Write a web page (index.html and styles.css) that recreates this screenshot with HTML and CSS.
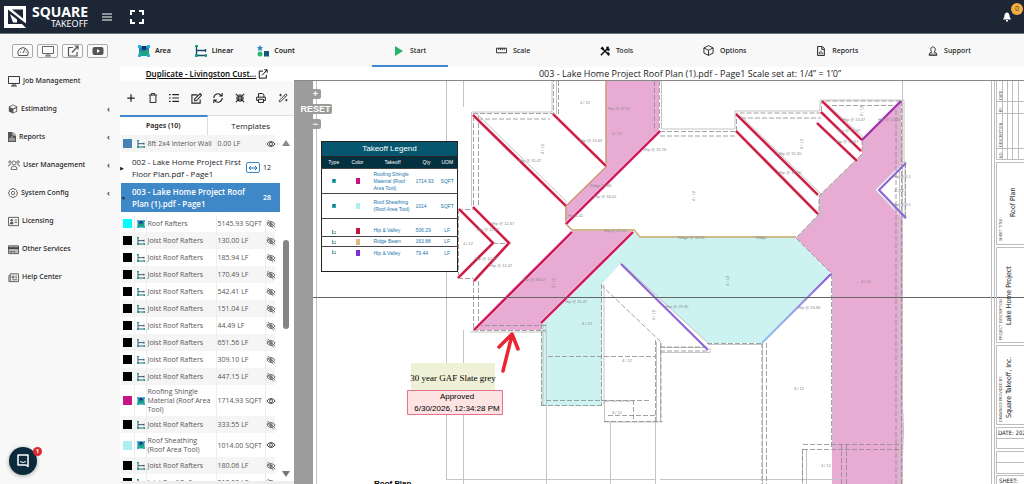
FILE: index.html
```html
<!DOCTYPE html>
<html lang="en">
<head>
<meta charset="utf-8">
<title>Square Takeoff</title>
<link rel="stylesheet" href="styles.css">
</head>
<body>
<svg class="defs" aria-hidden="true">
  <symbol id="area" viewBox="0 0 12 12"><path d="M1 1h10v10H1z" fill="#1b7fc4"/><path d="M1 5l4 2 6-3v7H1z" fill="#18a77a"/><path d="M4 1h4v4H4z" fill="#0c3d5c"/><path d="M0 0h3v3H0zM9 0h3v3H9zM0 9h3v3H0zM9 9h3v3H9z" fill="#2fa8e0"/></symbol>
  <symbol id="linear" viewBox="0 0 12 12"><path d="M1.500 1v10M1 10.500h10.500M1.500 5.500h9M10.500 4v3" fill="none" stroke="#174a63" stroke-width="1.300"/><path d="M0 0h3v2H0zM0 9h3v3H0zM10 9h2v3h-2z" fill="#1e9f88"/></symbol>
  <symbol id="off" viewBox="0 0 12 12"><path d="M1 6q5-6 10 0q-5 6-10 0zM2 1l9 9M1 3l8 8" fill="none" stroke="#555"/><circle cx="6" cy="6" r="2" fill="#777"/></symbol>
  <symbol id="eye" viewBox="0 0 12 12"><path d="M1 6q5-6 10 0q-5 6-10 0z" fill="none" stroke="#444" stroke-width="1.200"/><circle cx="6" cy="6" r="1.800" fill="none" stroke="#444"/></symbol>
  <symbol id="monitor" viewBox="0 0 12 12"><path d="M.5 1.500h11v7H.5zM5 8.500v2.500M7 8.500v2.500M3 11h6" fill="none" stroke="currentColor" stroke-width=".9"/></symbol>
  <symbol id="open" viewBox="0 0 12 12"><path d="M6 2.500H1.500v8.500H10V7M5 7.500L11 1M7.500 1H11v3.500" fill="none" stroke="currentColor" stroke-width="1.200"/></symbol>
</svg>
<header class="top">
  <a class="brand" href="#" aria-label="Square Takeoff">
    <svg class="mark" viewBox="0 0 22 22"><path d="M0 0h22v17.500L4 3.500V18h14l4 4H0z" fill="#fff"/><path d="M5 8l11 8.500H5zM8 3.500h11v9z" fill="#1d2634"/><path d="M6 8l7 5.500v3H9z" fill="#fff"/></svg>
    <span class="word"><b>SQUARE</b><span>TAKEOFF</span></span>
  </a>
  <button class="bare white" aria-label="Menu"><svg class="i10" viewBox="0 0 10 10"><path d="M0 2h10M0 5h10M0 8h10" stroke="currentColor" stroke-width="1.200"/></svg></button>
  <button class="bare white" aria-label="Full screen"><svg class="i14" viewBox="0 0 14 14"><path d="M1 5V1h4M9 1h4v4M13 9v4H9M5 13H1V9" fill="none" stroke="currentColor" stroke-width="2"/></svg></button>
  <button class="bare white bell" aria-label="Notifications"><svg class="i10" viewBox="0 0 10 10"><path d="M5 .5C2.500 1 2.500 3 2.300 5L1 7.500h8L7.700 5C7.500 3 7.500 1 5 .5zM4 8h2v1.500H4z" fill="currentColor"/></svg><span class="count">0</span></button>
</header>
<div class="shell">
<aside class="side">
  <div class="quick">
    <button aria-label="Dashboard"><svg class="i12" viewBox="0 0 12 12"><path d="M1.500 10.500a5.200 5.200 0 1 1 9 0zM6 8l2-4M3 7h1M8.500 7h1M4 4l.5.500" fill="none" stroke="currentColor"/></svg></button>
    <button aria-label="Screen"><svg class="i12"><use href="#monitor"/></svg></button>
    <button aria-label="Open"><svg class="i12"><use href="#open"/></svg></button>
    <button aria-label="Videos"><svg class="i12" viewBox="0 0 12 12"><rect x=".5" y="2" width="11" height="8" rx="2" fill="currentColor"/><path d="M5 4l3 2-3 2z" fill="#fff"/></svg></button>
  </div>
  <nav class="menu">
    <a href="#"><svg class="i12"><use href="#monitor"/></svg>Job Management</a>
    <a href="#"><svg class="i10" viewBox="0 0 12 12"><path d="M6 .5l5 2.500v6L6 11.500 1 9V3z" fill="#555"/><path d="M2 3.500l4 2 4-2-4-2zM6.500 6.500L10 5v3.500l-3.500 2z" fill="#f8f8f8"/></svg>Estimating<i>‹</i></a>
    <a href="#"><svg class="i8" viewBox="0 0 8 10"><path d="M0 0h5l3 3v7H0z" fill="#555"/><path d="M5 0v3h3M2 9V6M4 9V4.500M6 9V6" fill="none" stroke="#fff" stroke-width=".8"/></svg>Reports<i>‹</i></a>
    <a href="#"><svg class="i12" viewBox="0 0 12 12"><g fill="none" stroke="#555" stroke-width=".8"><circle cx="6" cy="4" r="2"/><circle cx="2" cy="3" r="1.200"/><circle cx="10" cy="3" r="1.200"/><path d="M3 10.500q0-3.500 3-3.500t3 3.500zM.3 7.500Q.3 5.500 3 5.500M11.700 7.500q0-2-2.700-2"/></g></svg>User Management<i>‹</i></a>
    <a href="#"><svg class="i10" viewBox="0 0 12 12"><g fill="none" stroke="#555"><path d="M5 .5h2l.5 1.500 1.500-.5L10.500 3 10 4.500l1.500.5v2l-1.500.5.500 1.500L9 10.500 7.500 10 7 11.500H5L4.500 10 3 10.500 1.500 9 2 7.500.5 7V5L2 4.500 1.500 3 3 1.500l1.500.5z"/><circle cx="6" cy="6" r="2"/></g></svg>System Config<i>‹</i></a>
    <a href="#"><svg class="i11" viewBox="0 0 12 12"><path d="M.5 1.500h11v9H.5zM7 4.500h3M7 7h3" fill="none" stroke="#555"/><circle cx="4" cy="4.500" r="1.300" fill="#555"/><path d="M2 9q0-3 2-3t2 3z" fill="#555"/></svg>Licensing</a>
    <a href="#"><svg class="i11" viewBox="0 0 12 12"><path d="M.5 2h11v8.500H.5z" fill="#bbb" stroke="#555"/><path d="M0 4.500h12" stroke="#444" stroke-width="2"/><path d="M2 8.500h3M6 8.500h2" stroke="#444"/></svg>Other Services</a>
    <a href="#"><svg class="i11" viewBox="0 0 12 12"><path d="M2.500 2h9v8.500H1V4h1.500zM2.500 4v6M4.500 4.500h2v2h-2zM8 4.500h2M8 6.500h2M4.500 8.500H10" fill="none" stroke="#555"/></svg>Help Center</a>
  </nav>
  <button class="chat" aria-label="Open chat"><svg class="i14" viewBox="0 0 14 14"><path d="M2 1h10v11.500L10 11H2z" fill="none" stroke="#fff" stroke-width="1.500" stroke-linejoin="round"/><path d="M4 7.500q3 2 6 0" fill="none" stroke="#fff"/></svg><span>1</span></button>
</aside>
<main class="main">
  <div class="bar">
    <div class="kinds">
      <button class="bare"><svg class="i12"><use href="#area"/></svg>Area</button>
      <button class="bare"><svg class="i12"><use href="#linear"/></svg>Linear</button>
      <button class="bare"><svg class="i12" viewBox="0 0 12 12"><path d="M3 0l1 2 2 .3L4.500 3.700 5 6 3 5 1 6l.5-2.300L0 2.300 2 2z" fill="#2a86d8"/><circle cx="3" cy="9" r="2.500" fill="#2bb673"/><path d="M7 6h5v5.500H7z" fill="#135a78"/></svg>Count</button>
    </div>
    <nav class="tabs">
      <a class="on" href="#"><svg class="i10" viewBox="0 0 10 10"><path d="M1 0l8 5-8 5z" fill="#26b36a"/></svg>Start</a>
      <a href="#"><svg class="i11" viewBox="0 0 12 12"><path d="M.5 3.500h11v5H.5zM3 3.500v2M5 3.500v2M7 3.500v2M9 3.500v2" fill="none" stroke="#222"/></svg>Scale</a>
      <a href="#"><svg class="i10" viewBox="0 0 12 12"><path d="M2 2l8.500 8.500M1 11l9-9" stroke="#111" stroke-width="1.800"/><path d="M.5 3L3 .5 5 3 3 5zM7.500 1l3-.5v3l1.500-.5-1 3-3-1z" fill="#111"/><path d="M8 9l2-2 2 3-2 2z" fill="#111"/></svg>Tools</a>
      <a href="#"><svg class="i11" viewBox="0 0 12 12"><path d="M6 .7l5 2.500v5.600l-5 2.500-5-2.500V3.200zM1 3.200l5 2.500 5-2.500M6 5.700v5.600" fill="none" stroke="#222"/></svg>Options</a>
      <a href="#"><svg class="i10" viewBox="0 0 12 12"><path d="M2 .5h5.500L10 3v8.500H2zM7 .5V4h3" fill="none" stroke="#222" stroke-width="1.200"/><path d="M4 10V7M6 10V5.500M8 10V8" stroke="#222"/></svg>Reports</a>
      <a href="#"><svg class="i10" viewBox="0 0 12 12"><path d="M1.500 11.500v-2q0-1.500 3-2Q2.500 5 3.500 2.500 6-1 8.500 2.500q1 2.500-1 5 3 .5 3 2v2zM1.500 9.800h9" fill="none" stroke="#222"/></svg>Support</a>
    </nav>
  </div>
  <div class="work">
  <section class="panel">
    <a class="job" href="#"><span>Duplicate - Livingston Cust...</span><svg class="i10"><use href="#open"/></svg></a>
    <div class="tools">
      <button class="bare" aria-label="Add"><svg class="i10" viewBox="0 0 12 12"><path d="M6 1.500v9M1.500 6h9" stroke="#222" stroke-width="1.500"/></svg></button>
      <button class="bare" aria-label="Delete"><svg class="i10" viewBox="0 0 12 12"><path d="M1 2.500h10M4 2.500v-2h4v2M2.500 3v8.500h7V3" fill="none" stroke="#222" stroke-width="1.200"/></svg></button>
      <button class="bare" aria-label="List"><svg class="i10" viewBox="0 0 12 12"><path d="M0 2h2M0 6h2M0 10h2M4 2h8M4 6h8M4 10h8" stroke="#222" stroke-width="1.400"/></svg></button>
      <button class="bare" aria-label="Edit"><svg class="i11" viewBox="0 0 12 12"><path d="M7 2H1v9h9V7M4 8.500V6.500L10 .7l1.500 1.500L6 8.500z" fill="none" stroke="#222" stroke-width="1.200"/></svg></button>
      <button class="bare" aria-label="Refresh"><svg class="i10" viewBox="0 0 12 12"><path d="M1 6a5 5 0 0 1 9-3M11 0v3.500H7.500M11 6a5 5 0 0 1-9 3M1 12V8.500h3.500" fill="none" stroke="#222" stroke-width="1.300"/></svg></button>
      <button class="bare" aria-label="Collapse"><svg class="i10" viewBox="0 0 12 12"><path d="M1 1l4 4M5 1.500V5H1.500M11 1L7 5M7 1.500V5h3.500M1 11l4-4M1.500 7H5v3.500M11 11L7 7M7 10.500V7h3.500" fill="none" stroke="#222" stroke-width="1.300"/></svg></button>
      <button class="bare" aria-label="Print"><svg class="i10" viewBox="0 0 12 12"><path d="M3 5V.7h5L9.500 2v3M3 9H.8V5h10.400v4H9M3 7.500h6v4H3z" fill="none" stroke="#222" stroke-width="1.200"/></svg></button>
      <button class="bare" aria-label="Magic"><svg class="i10" viewBox="0 0 12 12"><path d="M1 9.500L9.500 1 11 2.500 2.500 11zM7.500 3L9 4.500M3 1v3M1.500 2.500h3M10 7v3M8.500 8.500h3" fill="none" stroke="#222"/></svg></button>
    </div>
    <div class="switch"><button class="on">Pages (10)</button><button>Templates</button></div>
    <div class="tree">
      <div class="rows">
        <table class="items first"><tr><td><span class="sw steel"></span></td><td><svg class="i8"><use href="#linear"/></svg></td><td>8ft 2x4 Interior Wall</td><td>0.00 LF</td><td><svg class="i10"><use href="#eye"/></svg></td></tr></table>
        <div class="page"><button class="bare tw" aria-label="Expand">▶</button><span>002 - Lake Home Project First Floor Plan.pdf - Page1</span><button class="fit" aria-label="Fit width"><svg class="i10" viewBox="0 0 10 10"><path d="M1 5h8M3 3L1 5l2 2M7 3l2 2-2 2" fill="none" stroke="currentColor"/></svg></button><em>12</em></div>
        <div class="page current"><button class="bare tw" aria-label="Collapse">▼</button><span>003 - Lake Home Project Roof Plan (1).pdf - Page1</span><em>28</em></div>
        <table class="items">
          <tr><td><span class="sw aqua"></span></td><td><svg class="i8"><use href="#area"/></svg></td><td>Roof Rafters</td><td>5145.93 SQFT</td><td><svg class="i10"><use href="#off"/></svg></td></tr>
          <tr><td><span class="sw"></span></td><td><svg class="i8"><use href="#linear"/></svg></td><td>Joist Roof Rafters</td><td>130.00 LF</td><td><svg class="i10"><use href="#off"/></svg></td></tr>
          <tr><td><span class="sw"></span></td><td><svg class="i8"><use href="#linear"/></svg></td><td>Joist Roof Rafters</td><td>185.94 LF</td><td><svg class="i10"><use href="#off"/></svg></td></tr>
          <tr><td><span class="sw"></span></td><td><svg class="i8"><use href="#linear"/></svg></td><td>Joist Roof Rafters</td><td>170.49 LF</td><td><svg class="i10"><use href="#off"/></svg></td></tr>
          <tr><td><span class="sw"></span></td><td><svg class="i8"><use href="#linear"/></svg></td><td>Joist Roof Rafters</td><td>542.41 LF</td><td><svg class="i10"><use href="#off"/></svg></td></tr>
          <tr><td><span class="sw"></span></td><td><svg class="i8"><use href="#linear"/></svg></td><td>Joist Roof Rafters</td><td>151.04 LF</td><td><svg class="i10"><use href="#off"/></svg></td></tr>
          <tr><td><span class="sw"></span></td><td><svg class="i8"><use href="#linear"/></svg></td><td>Joist Roof Rafters</td><td>44.49 LF</td><td><svg class="i10"><use href="#off"/></svg></td></tr>
          <tr><td><span class="sw"></span></td><td><svg class="i8"><use href="#linear"/></svg></td><td>Joist Roof Rafters</td><td>651.56 LF</td><td><svg class="i10"><use href="#off"/></svg></td></tr>
          <tr><td><span class="sw"></span></td><td><svg class="i8"><use href="#linear"/></svg></td><td>Joist Roof Rafters</td><td>309.10 LF</td><td><svg class="i10"><use href="#off"/></svg></td></tr>
          <tr><td><span class="sw"></span></td><td><svg class="i8"><use href="#linear"/></svg></td><td>Joist Roof Rafters</td><td>447.15 LF</td><td><svg class="i10"><use href="#off"/></svg></td></tr>
          <tr><td><span class="sw plum"></span></td><td><svg class="i8"><use href="#area"/></svg></td><td>Roofing Shingle Material (Roof Area Tool)</td><td>1714.93 SQFT</td><td><svg class="i10"><use href="#eye"/></svg></td></tr>
          <tr><td><span class="sw"></span></td><td><svg class="i8"><use href="#linear"/></svg></td><td>Joist Roof Rafters</td><td>333.55 LF</td><td><svg class="i10"><use href="#off"/></svg></td></tr>
          <tr><td><span class="sw mint"></span></td><td><svg class="i8"><use href="#area"/></svg></td><td>Roof Sheathing (Roof Area Tool)</td><td>1014.00 SQFT</td><td><svg class="i10"><use href="#eye"/></svg></td></tr>
          <tr><td><span class="sw"></span></td><td><svg class="i8"><use href="#linear"/></svg></td><td>Joist Roof Rafters</td><td>180.06 LF</td><td><svg class="i10"><use href="#off"/></svg></td></tr>
          <tr><td><span class="sw"></span></td><td><svg class="i8"><use href="#linear"/></svg></td><td>Joist Roof Rafters</td><td>210.50 LF</td><td><svg class="i10"><use href="#off"/></svg></td></tr>
        </table>
      </div>
      <div class="scroll"><i class="up"></i><div class="track"><b></b></div><i class="down"></i></div>
    </div>
  </section>
  <section class="view">
    <h1>003 - Lake Home Project Roof Plan (1).pdf - Page1 Scale set at: 1/4” = 1’0”</h1>
    <div class="canvas">
      <svg class="plan" viewBox="294 81 730 403" preserveAspectRatio="xMinYMin slice">
        <defs><linearGradient id="fade" x1="1" y1="0" x2="0" y2="1"><stop offset="0" stop-color="#8a50cf"/><stop offset=".5" stop-color="#9a9ce6"/><stop offset="1" stop-color="#8cc4e8"/></linearGradient></defs>
        <path d="M294 80h19v404h-19z" fill="#9c9c9c"/>
        <g fill="#e8abd3">
          <path d="M606 80h53v51l-93 93v-18l40-39z"/>
          <path d="M572 231h61l-92 93h5v6h-73z"/>
          <path d="M901 101l-39 39v14l-43 42v18l-23 24 36 36v210h70l2-54-2-50V218l-27-28 27-27z"/>
        </g>
        <path d="M541 324l93-92 6 6h156l35 36-69 69h-54l-88-79-18 20v122h-61z" fill="#ccf3f2"/>
        <g fill="none" stroke="#c4c4c4">
          <path d="M316.500 81v403M446.500 81v398M463.500 81v26M463.500 330v154M546.500 331v153M610.500 421v63M655.500 421v63M902.500 81v403M446 479.500h210M660 479.500h180"/>
          <path d="M471.500 206v-94H552V81M556.500 81v33M661.500 81v48H735v-18h85V100h84v63M604 284v121M832.500 272v177M762.500 343v141M708 344.500h54M656.500 342v80M660.500 342v80M470 332h76v-9M604.500 401v21h58M802.500 449v35M806.500 449v35M660 352.500h50v-4M543 324v82M899.500 110v374"/>
          <path d="M475 112l92 90M660 347.500h46M740 115l81 79v20l-22 24M824 101l41 38v15l-43 42M620 262l88 81M566 206v18l5 5M875 190l30-29v58l-30-29"/>
        </g>
        <g fill="none" stroke="#8c8c8c" stroke-width=".8" stroke-dasharray="5 2">
          <path d="M473 113.500h80.500V81M473.500 116v91M478.500 116v91M478 119h72M558.500 81v34M659.500 81v50M654.500 81v50M660 131.500h76M660 136h76M736.500 131v-18h85v-12h80M741 118h80M825 105.500h70M473.500 281v49M478.500 281v49M458.500 209v69M473 330.500h73M478 325.500h68M541.500 324v81M601.500 284v121M541 405.500h63M546 400.500h105M548 356.500h107M601 285l60 57v79M655.500 340v81M604 421.500h58M604.500 401h29v20M608 415.500h48M660 347h48M660 351h48M707 343.500h55M762 343v141M766.500 343v141M831.500 274v175M803 444.500h99M803 449.500h99M802.500 449v35M841.500 444v40M846.500 444v40M896 110v374M901.500 101v383M905.500 163v55M862 140v14l-43 42v18l-23 24 36 36M493 243.500h16M458 209.500h15M458 278.500h15"/>
        </g>
        <path d="M572 230h62l6 7h156" fill="none" stroke="#cdbb8c" stroke-width="1.800"/>
        <path d="M606 81v86l-40 39v18l6 6" fill="none" stroke="#cf9874" stroke-width="1.500"/>
        <g fill="none" stroke="#ffd0d8" stroke-width="3.500"><path d="M473 115l93 91M553 114l53 52M736 114l82 81M736 131l82 83M822 101l40 39M821 112l40 39M817 123l40 38M459 209l34 34-35 35M473 207l36 36-35 38M660 131l-94 93M572 232l-98 98M633 232l-92 91"/></g>
        <g fill="none" stroke="#c71c42" stroke-width="2.400"><path d="M473 115l93 91M553 114l53 52M736 114l82 81M736 131l82 83M822 101l40 39M821 112l40 39M817 123l40 38M459 209l34 34-35 35M473 207l36 36-35 38"/><path stroke="#ca1760" d="M660 131l-94 93M572 232l-98 98M633 232l-92 91"/></g>
        <path d="M901 101l-39 39" stroke="#9d35b0" stroke-width="2.400"/>
        <path d="M906 163l-27 27 27 28M621 264l87 86" fill="none" stroke="#8f68d6" stroke-width="2.200"/>
        <path d="M831 274l-69 69" stroke="url(#fade)" stroke-width="2"/>
        <g class="tiny">
          <text x="519" y="162">Hip @ 31.47</text><text x="580" y="142">Hip @ 19.43</text><text x="608" y="110">Hip @ 37.57</text><text x="644" y="151">Hip @ 31.76</text><text x="590" y="187">Ridge 13.86</text><text x="594" y="198">Hip @ 34.02</text><text x="568" y="217">Hip 6.42</text><text x="604" y="232">Hip @ 27.01</text><text x="678" y="239">Ridge @ 52.41</text><text x="756" y="239">Ridge</text><text x="779" y="155">Hip @ 31.30</text><text x="779" y="174">Hip @ 31.30</text><text x="843" y="121">Hip @ 13.47</text><text x="878" y="121">Hip @ 13.25</text><text x="838" y="132">Hip @ 13.47</text><text x="836" y="143">Hip @ 13.47</text><text x="893" y="178">Hip @ 9.5</text><text x="893" y="206">Hip @ 9.5</text><text x="477" y="231">Hip @ 12.47</text><text x="492" y="225">Hip @ 12.47</text><text x="475" y="260">Hip @ 12.47</text><text x="490" y="267">Hip @ 12.47</text><text x="523" y="281">Hip @ 34.02</text><text x="565" y="303">Hip @ 31.47</text><text x="666" y="308">Hip @ 29.30</text><text x="798" y="309">Hip @ 23.68</text><text x="580" y="104">4 / 12</text><text x="612" y="135">4 / 12</text><text x="582" y="325">4 / 12</text><text x="622" y="362">4 / 12</text><text x="612" y="414">4 / 12</text><text x="794" y="390">4 / 12</text><text x="861" y="283">4 / 12</text><text x="821" y="467">4 / 12</text><text x="894" y="192">4 / 12</text><text x="463" y="245">4 / 12</text>
          <text transform="translate(544 154) rotate(-90)">4 / 12</text><text transform="translate(695 201) rotate(-90)">4 / 12</text><text transform="translate(803 149) rotate(-90)">4 / 12</text><text transform="translate(863 116) rotate(-90)">4 / 12</text><text transform="translate(555 288) rotate(-90)">4 / 12</text><text transform="translate(655 320) rotate(-90)">4 / 12</text><text transform="translate(729 286) rotate(-90)">4 / 12</text>
        </g>
        <path d="M313 297.500h711" stroke="#666"/>
        <path d="M503 371l9-36M499 347l13-13 6 15" fill="none" stroke="#ea2430" stroke-width="3.500" stroke-linecap="round" stroke-linejoin="round"/>
        <g fill="none" stroke="#bdbdbd"><path d="M991.500 81v403M994.500 81v403M1024 159.500h-27.500V81M1002.500 81v78M1007.500 81v78M1012.500 81v78M1018.500 81v78M997 101.500h27M997 113.500h27M997 148.500h27M1024 162.500h-27.500v82H1024M1024 247.500h-27.500v95H1024M1024 345.500h-27.500v79H1024M1024 427.500h-27.500v21H1024M997 438.500h27M1024 451.500h-27.500v22H1024M997 462.500h27M1024 475.500h-27.500V484"/></g>
        <g class="sheet"><text transform="translate(1015 217) rotate(-90)">Roof Plan</text><text transform="translate(1011 325) rotate(-90)">Lake Home Project</text><text transform="translate(1011 418) rotate(-90)">Square Takeoff, Inc.</text></g>
        <g class="note"><text transform="translate(1002 241) rotate(-90)">SHEET TITLE:</text><text transform="translate(1002 340) rotate(-90)">PROJECT DESCRIPTION:</text><text transform="translate(1002 422) rotate(-90)">DRAWINGS PROVIDED BY:</text><text transform="translate(1002 158) rotate(-90)">NO.</text><text transform="translate(1002 147) rotate(-90)">DESCRIPTION</text><text transform="translate(1002 112) rotate(-90)">BY</text><text transform="translate(1002 100) rotate(-90)">DATE</text></g>
        <g class="stamp"><text x="998" y="435">DATE: 202</text><text x="999" y="483">SHEET:</text></g>
        <text class="caption" x="374" y="486">Roof Plan</text>
        <path d="M411 363h84v28h-84z" fill="#eff1d6"/>
        <text class="slate" x="453" y="381">30 year GAF Slate grey</text>
        <path d="M407.500 390.500h95v24h-95z" fill="#fde3e1" stroke="#e6718a"/>
        <text class="ok" x="457" y="399">Approved</text><text class="ok" x="457" y="411">6/30/2026, 12:34:28 PM</text>
      </svg>
      <div class="zoom"><button>+</button><button>RESET</button><button>−</button></div>
      <table class="legend">
        <caption>Takeoff Legend</caption>
        <thead><tr><th>Type</th><th>Color</th><th>Takeoff</th><th>Qty</th><th>UOM</th></tr></thead>
        <tbody>
          <tr class="tall"><td><svg class="i4"><use href="#area"/></svg></td><td><span class="chip plum"></span></td><td>Roofing Shingle Material (Roof Area Tool)</td><td>1714.93</td><td>SQFT</td></tr>
          <tr class="tall"><td><svg class="i4"><use href="#area"/></svg></td><td><span class="chip mint"></span></td><td>Roof Sheathing (Roof Area Tool)</td><td>1014</td><td>SQFT</td></tr>
          <tr class="mid"><td><svg class="i4"><use href="#linear"/></svg></td><td><span class="chip red"></span></td><td>Hip &amp; Valley</td><td>506.29</td><td>LF</td></tr>
          <tr><td><svg class="i4"><use href="#linear"/></svg></td><td><span class="chip tan"></span></td><td>Ridge Beam</td><td>163.88</td><td>LF</td></tr>
          <tr class="last"><td><svg class="i4"><use href="#linear"/></svg></td><td><span class="chip violet"></span></td><td>Hip &amp; Valley</td><td>79.44</td><td>LF</td></tr>
        </tbody>
      </table>
    </div>
  </section>
  </div>
</main>
</div>
</body>
</html>
```
FILE: styles.css
```css
* { box-sizing: border-box; }
body { margin: 0; height: 100vh; display: flex; flex-direction: column; overflow: hidden; background: #fff; color: #222; font: 8px/12px "Open Sans", "Noto Sans", sans-serif; }
button { font: inherit; color: inherit; cursor: pointer; }
a { color: inherit; text-decoration: none; }
svg { display: block; flex: none; }
.defs { position: absolute; width: 0; height: 0; }
.i4 { width: 4px; height: 4px; }
.i8 { width: 8px; height: 10px; }
.i10 { width: 10px; height: 10px; }
.i11 { width: 11px; height: 11px; }
.i12 { width: 12px; height: 12px; }
.i14 { width: 14px; height: 14px; }
.bare { display: flex; align-items: center; padding: 0; border: 0; background: none; }
.white { color: #fff; }

.top { flex: none; height: 34px; display: flex; align-items: center; gap: 18px; padding: 0 4px; background: #1d2634; border-bottom: 1px solid #6d737c; }
.brand { display: flex; align-items: center; gap: 4px; color: #fff; margin-right: -4px; }
.mark { width: 22px; height: 22px; }
.word { width: 58px; display: flex; flex-direction: column; align-items: flex-end; font: 9px/10px "Noto Sans", sans-serif; }
.word b { font-size: 14px; line-height: 14px; }
.bell { margin-left: auto; position: relative; margin-right: 8px; }
.count { position: absolute; left: 9px; top: -9px; width: 12px; height: 12px; border-radius: 50%; background: #f3ae42; color: #433; font-size: 7px; line-height: 12px; }

.shell { flex: 1; min-height: 0; display: flex; }
.side { flex: none; width: 120px; display: flex; flex-direction: column; background: #f8f8f8; }
.quick { display: flex; gap: 4px; padding: 10px 12px 9px; }
.quick button { width: 21px; height: 14px; display: grid; place-items: center; padding: 0; border: 1px solid #aaa; border-radius: 2px; background: #fafafa; color: #555; }
.menu { display: flex; flex-direction: column; font-family: "Noto Sans", sans-serif; font-size: 7px; }
.menu a { height: 28px; display: flex; align-items: center; gap: 3px; padding: 0 10px 0 8px; font-weight: 500; color: #222; }
.menu i { margin-left: auto; font-style: normal; font-size: 9px; }
.chat { position: relative; width: 28px; height: 28px; margin: auto 0 9px 9px; display: grid; place-items: center; padding: 0; border: 0; border-radius: 50%; background: #0b2b3c; box-shadow: 0 1px 4px #0005; }
.chat span { position: absolute; top: 0; right: -5px; width: 9px; height: 9px; border-radius: 50%; background: #e0292d; color: #fff; font: bold 6px/9px "Noto Sans", sans-serif; }

.main { flex: 1; min-width: 0; display: flex; flex-direction: column; }
.bar { flex: none; height: 33px; display: flex; background: #f8f8f8; font-family: "Noto Sans", sans-serif; font-size: 7px; }
.kinds { flex: none; width: 252px; display: flex; gap: 24px; padding-left: 18px; font-weight: 600; }
.kinds button { gap: 5px; }
.tabs { flex: 1; display: flex; justify-content: space-between; padding-right: 31px; }
.tabs a { display: flex; align-items: center; gap: 6px; padding: 2px 22px 0; font-weight: 500; border-bottom: 2px solid transparent; }
.tabs .on { border-color: #3f88cf; }
.work { flex: 1; min-height: 0; display: flex; }

.panel { flex: none; width: 174px; display: flex; flex-direction: column; border-bottom: 3px solid #eee; }
.job { height: 14px; display: flex; align-items: center; justify-content: center; gap: 2px; font: 600 8px/12px "Noto Sans", sans-serif; color: #111; }
.job span { text-decoration: underline; }
.tools { flex: none; height: 34px; display: flex; align-items: center; justify-content: space-between; padding: 0 6px; background: #f8f8f8; }
.switch { flex: none; height: 20px; display: flex; }
.switch button { flex: 1; padding: 0; border: 0; border-top: 1px solid #ddd; background: #fff; }
.switch .on { border-top: 2px solid #3f88cf; border-right: 1px solid #ddd; font: 600 7px/12px "Noto Sans", sans-serif; }
.tree { flex: 1; min-height: 0; display: flex; justify-content: space-between; }
.rows { width: 160px; overflow: hidden; }
.items { width: 154px; margin-left: 1px; table-layout: fixed; border-collapse: collapse; font-size: 7px; line-height: 9px; color: #555; }
.items td { height: 17px; padding: 0 1px; border-right: 1px solid #eee; }
.items td:nth-child(1) { width: 13px; padding-left: 2px; }
.items td:nth-child(2) { width: 12px; padding-left: 2px; }
.items td:nth-child(3) { width: 70px; }
.items td:nth-child(4) { width: 49px; white-space: nowrap; }
.items td:nth-child(5) { border: 0; padding: 0; }
.items tr:nth-child(even), .first tr { background: #f5f5f5; }
.items tr:nth-child(11) td { height: 31px; }
.items tr:nth-child(13) td { height: 24px; }
.sw { display: block; width: 9px; height: 9px; background: #000; }
.steel { background: #4682b4; }
.aqua { background: #0ff; }
.plum { background: #c71585; }
.mint { background: #afeeee; }
.red { background: #c8143c; }
.tan { background: #deb887; }
.violet { background: #7b2fd0; }
.page { display: flex; align-items: center; height: 31px; line-height: 12px; font-weight: 500; color: #222; }
.page .tw { width: 12px; font-size: 5px; }
.page span { width: 114px; }
.page em { margin-left: auto; width: 17px; font-style: normal; font-size: 7px; }
.current { height: 29px; margin-left: 1px; margin-bottom: 3px; background: #3f88c8; color: #fff; font-weight: 600; }
.current .tw { color: #222; width: 11px; }
.current span { width: 118px; }
.fit { width: 14px; height: 11px; display: grid; place-items: center; padding: 0; border: 1px solid #3f88c8; border-radius: 2px; background: #fff; color: #286fb0; }
.scroll { width: 8px; margin-right: 4px; display: flex; flex-direction: column; align-items: center; padding: 5px 0 4px; }
.scroll i { border: 4px solid transparent; }
.scroll .up { border-top: 0; border-bottom: 6px solid #888; }
.scroll .down { border-bottom: 0; border-top: 6px solid #777; }
.track { flex: 1; padding-top: 94px; }
.track b { display: block; width: 6px; height: 89px; border-radius: 3px; background: #858585; }

.view { flex: 1; min-width: 0; display: flex; flex-direction: column; }
h1 { flex: none; margin: 0; height: 13px; font-size: 9px; font-weight: 400; line-height: 14px; text-align: center; padding-left: 62px; }
.canvas { flex: 1; min-height: 0; position: relative; overflow: hidden; border-top: 1px solid #888; }
.plan { width: 100%; height: 100%; }
.tiny { font: 4px "Liberation Sans", sans-serif; fill: #888; }
.sheet { font: 7px "DejaVu Sans Condensed", "DejaVu Sans", sans-serif; fill: #222; }
.note { font: 4px "DejaVu Sans Condensed", "DejaVu Sans", sans-serif; fill: #555; }
.stamp { font: 6px "DejaVu Sans Condensed", "DejaVu Sans", sans-serif; fill: #222; }
.caption { font: bold 8px "Liberation Sans", sans-serif; }
.slate { font: 9px "Liberation Serif", serif; text-anchor: middle; }
.ok { font: 8px "Liberation Sans", sans-serif; text-anchor: middle; }
.zoom { position: absolute; left: 5px; top: 8px; width: 33px; display: flex; flex-direction: column; align-items: center; gap: 5px; }
.zoom button { min-width: 11px; height: 10px; padding: 0 1px; border: 0; border-radius: 2px; background: #9b9b9b; color: #fff; font: bold 9px/10px "Liberation Sans", sans-serif; }
.legend { position: absolute; left: 27px; top: 60px; width: 137px; table-layout: fixed; border-collapse: collapse; border: 1px solid #222; background: #fff; font: 5px/7px "Liberation Sans", sans-serif; color: #2277ae; }
.legend caption { height: 15px; border: 1px solid #222; border-bottom: 0; background: #05566e; color: #fff; font-size: 8px; line-height: 13px; }
.legend th { height: 12px; padding: 0; background: #03313f; color: #fff; font-weight: 400; }
.legend th:nth-child(1), .legend th:nth-child(2) { width: 24px; }
.legend th:nth-child(3) { width: 46px; }
.legend th:nth-child(4) { width: 22px; }
.legend td { height: 10px; padding: 0; border-top: 1px solid #444; }
.legend td:nth-child(3) { padding-left: 4px; }
.legend td:nth-child(5) { text-align: center; }
.legend td svg, .chip { margin: 0 auto; }
.chip { display: block; width: 4px; height: 6px; }
.legend .tall td { height: 25px; vertical-align: middle; }
.legend .mid td { height: 18px; vertical-align: bottom; padding-bottom: 2px; }
.legend .last td { height: 25px; vertical-align: top; padding-top: 3px; }
```
